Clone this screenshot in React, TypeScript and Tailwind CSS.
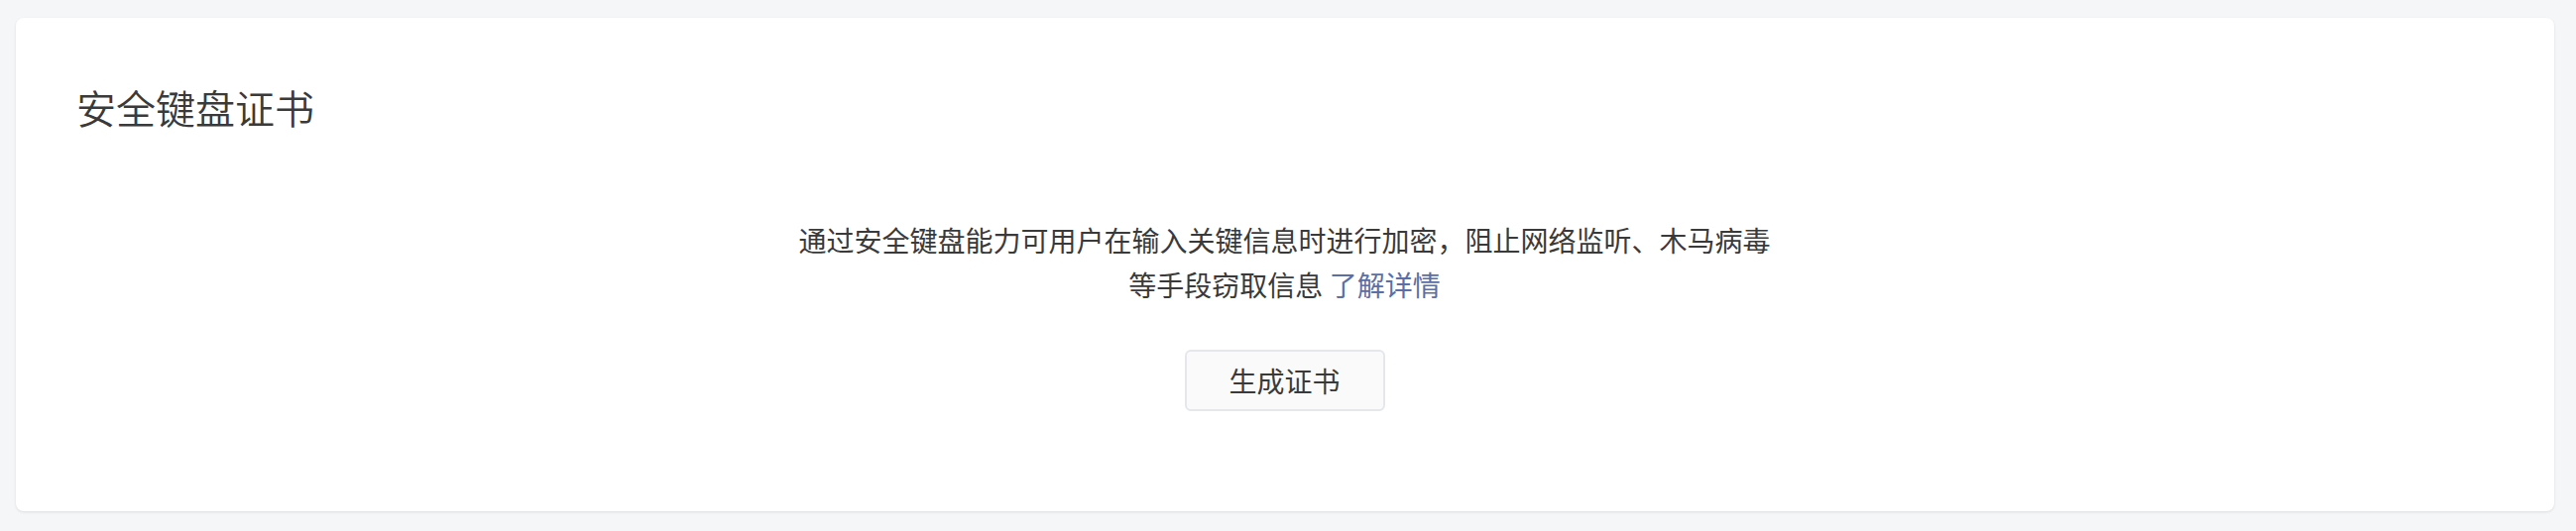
const App = () => {
  return (
    <div
      className="min-h-[536px] w-full bg-[#f5f6f8] pt-[18px] pl-4 pr-[22px] pb-5"
      style={{ fontFamily: '"Noto Sans CJK SC", "Noto Sans", sans-serif' }}
    >
      <div className="h-[498px] rounded-lg bg-white shadow-[0_1px_3px_rgba(0,0,0,0.1)] pl-[61px] pr-[62px] pt-[60px]">
        <h1 className="text-[40px] leading-[60px] text-[#3a3a3a] font-[350]">安全键盘证书</h1>

        <div className="mt-[82px] flex flex-col items-center">
          <p className="text-[28px] leading-[45px] text-[#3a3a3a] text-center">
            通过安全键盘能力可用户在输入关键信息时进行加密，阻止网络监听、木马病毒
            <br />
            等手段窃取信息 <a className="text-[#5b6ea6] cursor-pointer">了解详情</a>
          </p>

          <button className="mt-[43px] h-[62px] w-[202px] rounded-md border-2 border-[#e4e7ec] bg-[#fafafa] text-[28px] text-[#3a3a3a]">
            生成证书
          </button>
        </div>
      </div>
    </div>
  );
};

export default App;
